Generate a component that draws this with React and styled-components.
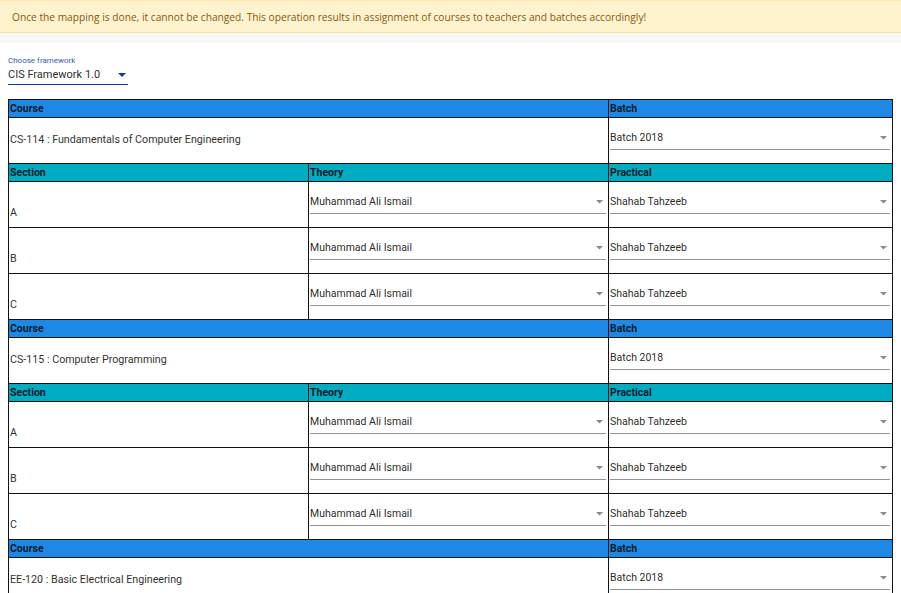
import styled, { createGlobalStyle } from "styled-components";

const GlobalStyle = createGlobalStyle`
  body {
    margin: 0;
    background: #fff;
    font-family: Roboto, "Liberation Sans", sans-serif;
  }
`;

const courses = [
  { code: "CS-114", title: "Fundamentals of Computer Engineering", batch: "Batch 2018" },
  { code: "CS-115", title: "Computer Programming", batch: "Batch 2018" },
  { code: "EE-120", title: "Basic Electrical Engineering", batch: "Batch 2018" },
];

const sections = ["A", "B", "C"];

const Arrow = ({ color = "#8a8a8a", size = 7 }) => (
  <svg width={size} height={size / 2} viewBox="0 0 8 4">
    <path d="M0 0 L8 0 L4 4 Z" fill={color} />
  </svg>
);

const Dropdown = ({ value }) => (
  <SelectBox>
    <span>{value}</span>
    <Arrow />
  </SelectBox>
);

const App = () => (
  <>
    <GlobalStyle />
    <Alert>
      Once the mapping is done, it cannot be changed. This operation results in assignment of courses to
      teachers and batches accordingly!
    </Alert>
    <Strip />
    <Content>
      <Framework>
        <FrameworkLabel>Choose framework</FrameworkLabel>
        <FrameworkSelect>
          <span>CIS Framework 1.0</span>
          <Arrow color="#1c3a8c" size={8} />
        </FrameworkSelect>
      </Framework>

      <MapTable>
        <colgroup>
          <col style={{ width: 300 }} />
          <col style={{ width: 300 }} />
          <col style={{ width: 284 }} />
        </colgroup>
        <tbody>
          {courses.map((c, ci) => (
            <Group key={c.code} course={c} last={ci === courses.length - 1} />
          ))}
        </tbody>
      </MapTable>
    </Content>
  </>
);

const Group = ({ course, last }) => (
  <>
    <tr>
      <HeadCell $tone="course" colSpan={2}>Course</HeadCell>
      <HeadCell $tone="course">Batch</HeadCell>
    </tr>
    <tr>
      <NameCell colSpan={2}>
        {course.code} : {course.title}
      </NameCell>
      <SelectCell>
        <Dropdown value={course.batch} />
      </SelectCell>
    </tr>
    {!last && (
      <>
        <tr>
          <HeadCell $tone="section">Section</HeadCell>
          <HeadCell $tone="section">Theory</HeadCell>
          <HeadCell $tone="section">Practical</HeadCell>
        </tr>
        {sections.map((s) => (
          <tr key={s}>
            <SectionCell>{s}</SectionCell>
            <SelectCell>
              <Dropdown value="Muhammad Ali Ismail" />
            </SelectCell>
            <SelectCell>
              <Dropdown value="Shahab Tahzeeb" />
            </SelectCell>
          </tr>
        ))}
      </>
    )}
  </>
);

export default App;

const Alert = styled.div`
  height: 33px;
  box-sizing: border-box;
  padding: 0 12px;
  display: flex;
  align-items: center;
  background: #fff3cd;
  border-top: 1px solid #fde9a8;
  border-bottom: 1px solid #f6e3a4;
  color: #7d5c14;
  font-family: "Open Sans", sans-serif;
  font-size: 10.2px;
`;

const Strip = styled.div`
  height: 10px;
  background: #f8f8f8;
`;

const Content = styled.div`
  padding: 12px 8px 0;
`;

const Framework = styled.div`
  display: flex;
  flex-direction: column;
  width: 120px;
  margin-bottom: 14px;
`;

const FrameworkLabel = styled.div`
  font-size: 8px;
  color: #3d5bb5;
  line-height: 11px;
`;

const FrameworkSelect = styled.div`
  display: flex;
  align-items: center;
  justify-content: space-between;
  padding: 2px 2px 2px 0;
  font-size: 11px;
  line-height: 14px;
  color: rgba(0, 0, 0, 0.87);
  border-bottom: 1px solid #1c3a8c;
`;

const MapTable = styled.table`
  width: 884px;
  border-collapse: collapse;
  table-layout: fixed;
`;

const HeadCell = styled.td`
  height: 17px;
  padding: 0 1px;
  border: 1px solid #111;
  background: ${(p) => (p.$tone === "course" ? "#1e88e5" : "#00acc1")};
  color: #0b1a2a;
  font-size: 10.5px;
  font-weight: 700;
  vertical-align: middle;
`;

const BodyCell = styled.td`
  padding: 0 1px;
  border: 1px solid #111;
  font-size: 10.7px;
  color: #333;
`;

const NameCell = styled(BodyCell)`
  height: 42px;
  vertical-align: middle;
  padding-bottom: 3px;
`;

const SectionCell = styled(BodyCell)`
  height: 37px;
  vertical-align: bottom;
  padding-bottom: 8px;
`;

const SelectCell = styled(BodyCell)`
  height: 32px;
  vertical-align: top;
  padding: 13px 2px 0 1px;
`;

const SelectBox = styled.div`
  display: flex;
  align-items: center;
  justify-content: space-between;
  padding: 0 3px 4px 0;
  line-height: 14px;
  font-size: 10.5px;
  color: rgba(0, 0, 0, 0.87);
  border-bottom: 1px solid #949494;
`;
